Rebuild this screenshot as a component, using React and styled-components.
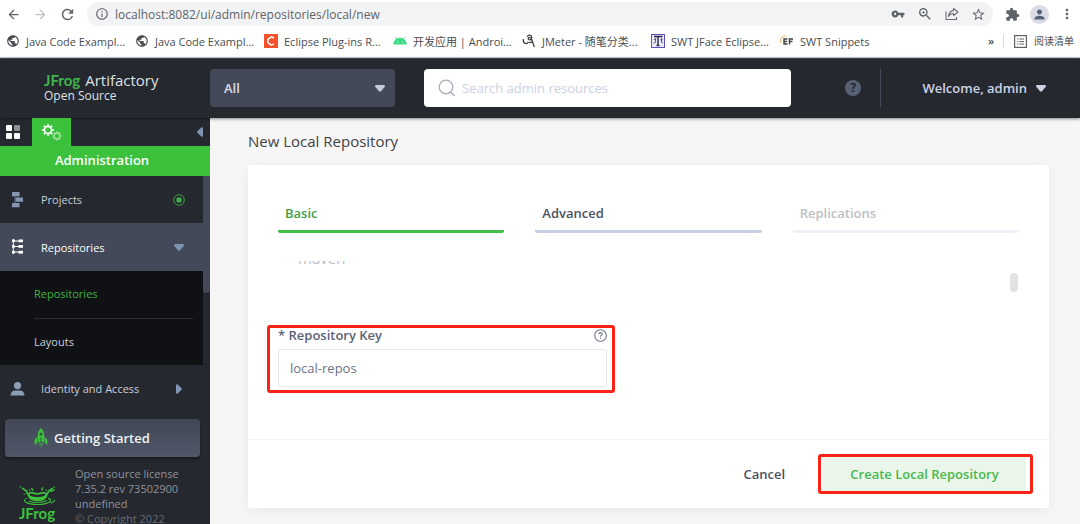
import React from "react";
import styled, { createGlobalStyle } from "styled-components";
import {
  MdArrowBack, MdArrowForward, MdRefresh, MdInfoOutline, MdVpnKey, MdZoomIn,
  MdStarBorder, MdExtension, MdPerson, MdMoreVert, MdPublic,
} from "react-icons/md";

const Global = createGlobalStyle`
  *, *::before, *::after { box-sizing: border-box; }
  body { margin: 0; font-family: "Open Sans", "Noto Sans CJK SC", sans-serif; font-size: 13px; }
  button, input, select { font-family: inherit; margin: 0; }
  button { border: 0; background: none; padding: 0; cursor: pointer; color: inherit; }
  a { color: inherit; text-decoration: none; }
  svg { display: block; flex: none; }
  h1, p, ul { margin: 0; padding: 0; }
  ul { list-style: none; }
`;

const Page = styled.div`
  display: flex;
  flex-direction: column;
  height: 100vh;
  overflow: hidden;
  background: #f6f6f6;
`;

/* Browser chrome */
const Toolbar = styled.div`
  display: flex;
  align-items: center;
  height: 28px;
  padding-left: 5px;
  background: #fff;
  color: #5f6368;
`;
const ToolButton = styled.button`
  display: flex;
  align-items: center;
  justify-content: center;
  width: ${(p) => p.$w || 27}px;
  height: 24px;
  color: ${(p) => (p.$dim ? "#bdc1c6" : "#5f6368")};
`;
const AddressBar = styled.div`
  display: flex;
  align-items: center;
  flex: 1;
  min-width: 0;
  height: 24px;
  margin: 0 6px 0 11px;
  padding: 0 1px 0 8px;
  border-radius: 12px;
  background: #f1f3f4;
`;
const Address = styled.input`
  flex: 1;
  min-width: 0;
  margin-left: 6px;
  padding: 0;
  border: 0;
  outline: 0;
  background: none;
  color: #5f6368;
  font-size: 12px;
`;
const Avatar = styled.span`
  display: grid;
  place-items: center;
  width: 19px;
  height: 19px;
  border-radius: 50%;
  background: #dadce5;
  color: #56617a;
`;
const Bookmarks = styled.nav`
  display: flex;
  align-items: center;
  height: 30px;
  padding: 0 6px 3px 6px;
  background: #fff;
  border-bottom: 1px solid #c9ccd0;
  color: #4a4d51;
  font-size: 11px;
`;
const Bookmark = styled.a`
  display: flex;
  align-items: center;
  gap: 6px;
  flex: 0 0 129px;
  white-space: nowrap;
`;
const Chevron = styled.button`
  margin-left: auto;
  font-size: 11px;
  font-weight: 600;
  line-height: 14px;
`;
const ReadingList = styled.button`
  display: flex;
  align-items: center;
  gap: 7px;
  margin-left: 9px;
  padding-left: 10px;
  height: 14px;
  border-left: 1px solid #dadce0;
  font-size: 10px;
  line-height: 14px;
  white-space: nowrap;
`;

/* Application header */
const Header = styled.header`
  position: relative;
  z-index: 1;
  display: flex;
  align-items: center;
  flex: none;
  height: 60px;
  padding-bottom: 1px;
  border-top: 1px solid #3c404b;
  background: #25282f;
  box-shadow: 0 1px 3px rgba(0, 0, 0, 0.45);
`;
const Brand = styled.a`
  flex: 0 0 210px;
  padding-left: 44px;
  color: #dfe1e6;
  line-height: 16px;
`;
const BrandLine = styled.span`
  display: flex;
  gap: 5px;
  font-size: ${(p) => p.$size}px;
`;
const BrandName = styled.b`
  color: #3eb449;
  font-family: "Lato", sans-serif;
`;
const ScopeBox = styled.div`
  position: relative;
  flex: 0 0 185px;
`;
const Scope = styled.select`
  appearance: none;
  display: block;
  width: 100%;
  height: 38px;
  padding: 0 14px;
  border: 0;
  border-radius: 4px;
  background: #434958;
  color: #dcdfe8;
  font-size: 13px;
  font-weight: 600;
`;
const ScopeCaret = styled.span`
  position: absolute;
  right: 10px;
  top: 16px;
  color: #c5cad6;
  pointer-events: none;
`;
const SearchBox = styled.label`
  display: flex;
  align-items: center;
  flex: 1;
  min-width: 0;
  gap: 6px;
  height: 38px;
  margin-left: 29px;
  padding: 0 14px;
  border-radius: 4px;
  background: #fff;
`;
const Search = styled.input`
  flex: 1;
  min-width: 0;
  padding: 0;
  border: 0;
  outline: 0;
  background: none;
  font-size: 13px;
  color: #434958;
  &::placeholder { color: #cbd1e4; opacity: 1; }
`;
const HelpButton = styled.button`
  display: grid;
  place-items: center;
  flex: none;
  width: 16px;
  height: 16px;
  margin: 0 19px 0 54px;
  border-radius: 50%;
  background: #566173;
  color: #25282f;
  font-size: 12px;
  font-weight: 700;
  line-height: 16px;
`;
const Account = styled.div`
  display: flex;
  align-items: center;
  height: 38px;
  padding: 0 34px 0 41px;
  border-left: 1px solid #434958;
`;
const AccountButton = styled.button`
  display: flex;
  align-items: center;
  gap: 9px;
  color: #cdd3e6;
  font-size: 13px;
  font-weight: 600;
  white-space: nowrap;
`;

/* Sidebar */
const Body = styled.div`
  display: flex;
  flex: 1;
  min-height: 0;
`;
const Sidebar = styled.aside`
  flex: 0 0 210px;
  overflow: hidden;
  background: #25282f;
  color: #c9cfdd;
`;
const ModeTabs = styled.div`
  position: relative;
  z-index: 1;
  display: flex;
  align-items: stretch;
  height: 28px;
`;
const ModeTab = styled.button`
  display: grid;
  place-items: center;
  width: ${(p) => (p.$active ? 39 : 32)}px;
  padding-right: ${(p) => (p.$active ? 0 : 6)}px;
  background: ${(p) => (p.$active ? "#3cc13c" : "none")};
`;
const Collapse = styled.button`
  margin-left: auto;
  padding-right: 7px;
`;
const ModeTitle = styled.div`
  height: 30px;
  padding-right: 6px;
  background: #3cc13c;
  color: #fff;
  font-weight: 600;
  line-height: 28px;
  text-align: center;
`;
const MenuFrame = styled.div`
  display: flex;
`;
const Menu = styled.nav`
  flex: 1;
  font-size: 11px;
`;
const MenuScroll = styled.div`
  width: 7px;
  height: 117px;
  border-radius: 0 0 4px 4px;
  background: #434958;
`;
const MenuItem = styled.a`
  display: flex;
  align-items: center;
  height: ${(p) => (p.$active ? 48 : 47)}px;
  padding: 0 18px 0 10px;
  background: ${(p) => (p.$active ? "#434958" : "none")};
  color: ${(p) => (p.$active ? "#fff" : "#c9cfdd")};
`;
const MenuIcon = styled.span`
  width: 31px;
`;
const MenuLabel = styled.span`
  flex: 1;
`;
const MenuMark = styled.span`
  display: grid;
  place-items: center;
  width: 12px;
`;
const SubMenu = styled.ul`
  padding: 0 10px 0 34px;
  background: #101115;
`;
const SubItem = styled.li`
  height: 47px;
  line-height: 46px;
  color: ${(p) => (p.$active ? "#3cb43c" : "#c9cfdd")};
  & + & { border-top: 1px solid #2b2d33; }
`;
const StartButton = styled.button`
  display: flex;
  align-items: center;
  gap: 6px;
  width: 195px;
  height: 38px;
  margin: 7px 0 0 5px;
  padding-left: 29px;
  border-radius: 4px;
  background: linear-gradient(#414756, #4f5768);
  box-shadow: 0 2px 3px rgba(0, 0, 0, 0.35);
  color: #f2f3f6;
  font-size: 13px;
  font-weight: 600;
`;
const License = styled.div`
  display: flex;
  padding: 9px 0 0 16px;
  gap: 17px;
`;
const LicenseLogo = styled.div`
  display: flex;
  flex-direction: column;
  align-items: center;
  width: 42px;
  padding-top: 20px;
  color: #3cc13c;
  font-family: "Liberation Sans Narrow", "Lato", sans-serif;
  font-size: 15px;
  font-weight: 700;
  line-height: 14px;
`;
const LicenseText = styled.p`
  color: #8f939d;
  font-size: 11px;
  line-height: 15px;
  white-space: nowrap;
`;
const Copyright = styled.span`
  display: block;
  color: #666a73;
`;

/* Main content */
const Main = styled.main`
  flex: 1;
  min-width: 0;
  display: flex;
  flex-direction: column;
  padding: 0 31px 16px 38px;
`;
const Title = styled.h1`
  height: 47px;
  color: #414347;
  font-size: 15px;
  font-weight: 400;
  line-height: 47px;
`;
const Card = styled.section`
  display: flex;
  flex-direction: column;
  flex: 1;
  min-height: 0;
  border-radius: 3px;
  background: #fff;
  box-shadow: 0 2px 12px rgba(0, 0, 0, 0.06);
`;
const Tabs = styled.div`
  display: grid;
  grid-template-columns: repeat(3, 1fr);
  gap: 31px;
  padding: 33px 30px 0;
`;
const Tab = styled.button`
  height: 35px;
  padding: 0 7px 2px;
  border-bottom: 3px solid ${(p) => p.$line};
  border-radius: 2px;
  color: ${(p) => p.$color};
  font-size: 13px;
  font-weight: 600;
  text-align: left;
`;
const FormArea = styled.div`
  display: flex;
  flex: 1;
  min-height: 0;
  margin-top: 28px;
  padding: 0 31px 0 19px;
  overflow: hidden;
`;
const FormScroll = styled.div`
  display: flex;
  flex-direction: column;
  justify-content: flex-end;
  flex: 1;
  padding-left: 11px;
  overflow: hidden;
`;
const PackageType = styled.div`
  flex: none;
  height: 77px;
  padding-left: 20px;
  color: #b9bec9;
  font-size: 15px;
  line-height: 20px;
`;
const Thumb = styled.div`
  width: 8px;
  height: 19px;
  margin-top: 12px;
  border-radius: 4px;
  background: #e2e2e2;
`;
const Field = styled.div`
  position: relative;
  flex: none;
  width: 329px;
  max-width: 100%;
  margin: 0 0 52px;
`;
const FieldHead = styled.div`
  display: flex;
  align-items: center;
  justify-content: space-between;
  height: 24px;
  padding-bottom: 4px;
  color: #5b6377;
  font-weight: 600;
`;
const FieldInput = styled.input`
  display: block;
  width: 100%;
  height: 38px;
  padding: 0 11px;
  border: 1px solid #e4e6ef;
  border-radius: 3px;
  outline: 0;
  color: #6b7386;
  font-size: 13px;
`;
const Highlight = styled.span`
  position: absolute;
  inset: ${(p) => p.$inset};
  border: 3px solid #fb2316;
  border-radius: 3px;
  pointer-events: none;
`;
const Actions = styled.footer`
  display: flex;
  align-items: center;
  justify-content: flex-end;
  gap: 38px;
  height: 69px;
  padding-right: 23px;
  border-top: 1px solid #f2f2f4;
`;
const Cancel = styled.button`
  color: #4b5162;
  font-size: 13px;
  font-weight: 600;
`;
const CreateBox = styled.div`
  position: relative;
`;
const Create = styled.button`
  display: block;
  width: 203px;
  height: 34px;
  background: #ebf6eb;
  color: #47b84b;
  font-size: 13px;
  font-weight: 600;
`;

const Caret = ({ color = "currentColor" }) => (
  <svg width="10" height="7" viewBox="0 0 10 7" fill={color}>
    <path d="M1 0h8q1.600 .8.600 2L6 6.300Q5 7.200 4 6.300L.4 2Q-.6.800 1 0Z" />
  </svg>
);
const SideCaret = ({ left }) => (
  <svg width="6" height="10" viewBox="0 0 6 10" fill="#7f93b2" transform={left ? "rotate(180)" : undefined}>
    <path d="M0 1Q.5-.4 1.800.600L5.600 4.300Q6.200 5 5.600 5.700L1.800 9.400Q.5 10.400 0 9Z" />
  </svg>
);
const SearchIcon = () => (
  <svg width="18" height="18" viewBox="0 0 18 18" fill="none" stroke="#a9aebb" strokeWidth="1.300">
    <circle cx="8" cy="8" r="6.800" />
    <path d="M12.500 13l4.300 4" strokeWidth="1.600" />
  </svg>
);
const ShareIcon = () => (
  <svg width="14" height="14" viewBox="0 0 14 14" fill="none" stroke="#6b6f74" strokeWidth="1.100">
    <path d="M1 4.500v8h10.500V10M8.500 1.500L13 5 8.500 8.500V6.500C6 6.500 4.500 7.500 3.500 9.500 3.800 6 5.500 3.900 8.500 3.600Z" strokeLinejoin="round" />
  </svg>
);
const EclipseC = () => (
  <svg width="14" height="14" viewBox="0 0 14 14">
    <rect width="14" height="14" fill="#f4512c" />
    <path d="M10 4.200A3.700 3.700 0 1 0 10 9.800" fill="none" stroke="#fff" strokeWidth="1.500" />
  </svg>
);
const AndroidHead = () => (
  <svg width="14" height="14" viewBox="0 0 14 14">
    <path d="M.3 10.500a6.700 6.700 0 0 1 13.400 0Z" fill="#3ddc84" />
    <path d="M3.900 5.500L2.500 3M10.100 5.500L11.500 3" stroke="#3ddc84" strokeWidth=".8" />
    <circle cx="4.300" cy="8" r=".6" fill="#fff" /><circle cx="9.700" cy="8" r=".6" fill="#fff" />
  </svg>
);
const CnblogsIcon = () => (
  <svg width="14" height="14" viewBox="0 0 14 14" fill="none" stroke="#38393c" strokeWidth="1.200">
    <path d="M1.200 5C1 9.500 4 11 6.500 7.800M5 2.800C6.500.3 9.800.6 9.800 3.600 9.800 6.600 6.200 6.600 6.200 4.400 6.300 2.900 8 2.900 9.500 4.600L12.300 13M7 8.800Q9 7.600 10.800 8.500" />
  </svg>
);
const JavaSourceIcon = () => (
  <svg width="14" height="14" viewBox="0 0 14 14" fill="none">
    <rect x=".5" y=".5" width="13" height="13" fill="#eceafa" stroke="#5a4fc0" />
    <path d="M3 2.500h8.500M7 3v8.500M5.500 11.500h3" stroke="#26273a" strokeWidth="1.400" />
    <path d="M4.500 4v4q-.3 1.500-2 1M10.500 4v4q.5 1.500 1.500.5M9.300 5.800h2.500M2.800 5.500h1.500" stroke="#5d5e78" />
  </svg>
);
const EfIcon = () => (
  <svg width="14" height="14" viewBox="0 0 14 14" fill="none">
    <path d="M1 9C-.2 5 2 2 5.500 1.800" stroke="#f3a64b" strokeWidth="1" />
    <path d="M7.500 5H4v5h3.500M4 7.500h3M13 5H9.500v5.500M9.500 7.500h3" stroke="#3f4147" strokeWidth="1.400" />
  </svg>
);
const ListIcon = () => (
  <svg width="13" height="13" viewBox="0 0 13 13" fill="none" stroke="#5f6368" strokeWidth="1.200">
    <rect x=".6" y=".6" width="11.800" height="11.800" />
    <path d="M3 4h1.300M5.300 4H10M3 6.500h1.300M5.300 6.500H10M3 9h1.300M5.300 9H10" />
  </svg>
);
const GridIcon = () => (
  <svg width="14" height="14" viewBox="0 0 14 14" fill="#fff">
    <rect width="6" height="6" rx="1" /><rect x="8" width="6" height="6" rx="1" fill="#8d8f94" />
    <rect y="8" width="6" height="6" rx="1" /><rect x="8" y="8" width="6" height="6" rx="1" />
  </svg>
);
const Gear = ({ x, y, r, color }) => (
  <g transform={`translate(${x} ${y}) scale(${r})`} fill="none" stroke={color}>
    <circle r=".62" strokeWidth=".28" />
    {[0, 45, 90, 135, 180, 225, 270, 315].map((a) => (
      <path key={a} d="M0-.72V-1" strokeWidth=".34" transform={`rotate(${a})`} />
    ))}
  </g>
);
const GearsIcon = () => (
  <svg width="20" height="17" viewBox="0 0 20 17">
    <Gear x={6} y={6} r={5.8} color="#fff" />
    <Gear x={15} y={12} r={4.6} color="#a5e3a5" />
  </svg>
);
const ProjectsIcon = () => (
  <svg width="14" height="16" viewBox="0 0 14 16" fill="#8496b0">
    <rect x="2" y="0" width="7.500" height="4.300" /><rect x="5.500" y="5.500" width="7.500" height="4.300" /><rect x="2" y="11" width="7.500" height="4.300" />
    <path d="M4.500 4h1v7h-1z" opacity=".6" />
  </svg>
);
const ReposIcon = () => (
  <svg width="14" height="16" viewBox="0 0 14 16" fill="#fff">
    <path d="M2.800 0h1.200v15H2.800z" opacity=".8" />
    <path d="M4 1.500h5v1H4zM4 7h5v1H4zM4 12.500h5v1H4z" />
    <rect x="2" y=".5" width="2.800" height="2.500" /><rect x="2" y="6.200" width="2.800" height="2.500" /><rect x="2" y="12" width="2.800" height="2.500" />
    <rect x="8.500" y=".5" width="4.500" height="2.800" /><rect x="8.500" y="6" width="4.500" height="2.800" /><rect x="8.500" y="11.800" width="4.500" height="2.800" />
  </svg>
);
const UserIcon = () => (
  <svg width="15" height="14" viewBox="0 0 15 14" fill="#8b9cb5">
    <circle cx="7.500" cy="3.600" r="3.600" /><path d="M.5 13.500Q1 8.500 5 8.500h5q4 0 4.500 5Z" />
  </svg>
);
const TargetIcon = () => (
  <svg width="12" height="12" viewBox="0 0 12 12">
    <circle cx="6" cy="6" r="5.300" fill="none" stroke="#3f9d45" /><circle cx="6" cy="6" r="2.700" fill="#3fae45" />
  </svg>
);
const RocketIcon = () => (
  <svg width="14" height="21" viewBox="0 0 14 21" fill="#3cc13c">
    <path d="M7 0Q10.500 3.500 10.300 8.500L10 14H4L3.700 8.500Q3.500 3.500 7 0Z" />
    <path d="M3.200 8.500L.6 12v5L3.500 14.500ZM10.800 8.500L13.400 12v5L10.500 14.500ZM4.500 15h1l-.2 3ZM8.500 15h1l-.8 3ZM6.300 15h1.400L7 21Z" />
    <circle cx="7" cy="6" r="1.500" fill="#2c5a3a" /><path d="M6.500 9.500h1V14h-1z" fill="#2c5a3a" />
  </svg>
);
const SplashIcon = () => (
  <svg width="37" height="20" viewBox="0 0 38 21" fill="none" stroke="#3cc13c" strokeLinecap="round">
    <path d="M3.500 2.500L7 5 9.500 9.500Q11 15 19 15T28.500 9.500L31 5 34.500 2.500" strokeWidth="1.800" />
    <path d="M9.500 9Q10.500 6 15 7.500 19 9 23 7.500 27.500 6 28.500 9 27 12.800 19 12.500 11 12.800 9.500 9Z" strokeWidth="1.900" />
    <path d="M10.500 11Q13 14 19 14T27.500 11" strokeWidth="2.400" />
    <path d="M7.500 13Q3.500 14.500 6.500 16.800 10.500 19.500 19 19.500T32 16.500Q34.500 14 30.500 13M10.500 16Q19 19 28.500 15.500M33 17.800Q36.500 16.800 37 14.800" strokeWidth="1.100" />
    <path d="M.9 1h.2M13 2.500l1 2M24.500 2l-1 2M33 5.500l3.500-1.500M36.500 1.200h.2M5 8.500h.2M10.500 4.500h.2M28 4.500h.2" strokeWidth="1.500" />
  </svg>
);
const HelpOutline = () => (
  <svg width="13" height="13" viewBox="0 0 13 13" fill="none" stroke="#6f7789" strokeWidth="1.100">
    <circle cx="6.500" cy="6.500" r="5.800" />
    <path d="M4.800 5.200Q4.900 3.600 6.500 3.600T8.200 5.100Q8.200 6 7.200 6.500 6.500 6.900 6.500 7.700M6.500 8.700v1" />
  </svg>
);

const bookmarks = [
  [<MdPublic size={14} />, "Java Code Exampl..."],
  [<MdPublic size={14} />, "Java Code Exampl..."],
  [<EclipseC />, "Eclipse Plug-ins R..."],
  [<AndroidHead />, "开发应用 | Androi..."],
  [<CnblogsIcon />, "JMeter - 随笔分类..."],
  [<JavaSourceIcon />, "SWT JFace Eclipse..."],
  [<EfIcon />, "SWT Snippets"],
];

export default function App() {
  return (
    <Page>
      <Global />
      <Toolbar>
        <ToolButton $w={17} aria-label="Back"><MdArrowBack size={15} /></ToolButton>
        <ToolButton $w={37} $dim aria-label="Forward"><MdArrowForward size={15} /></ToolButton>
        <ToolButton $w={17} aria-label="Reload"><MdRefresh size={17} /></ToolButton>
        <AddressBar>
          <MdInfoOutline size={14} />
          <Address aria-label="Address" defaultValue="localhost:8082/ui/admin/repositories/local/new" />
          <ToolButton aria-label="Passwords"><MdVpnKey size={14} /></ToolButton>
          <ToolButton aria-label="Zoom"><MdZoomIn size={16} /></ToolButton>
          <ToolButton aria-label="Share"><ShareIcon /></ToolButton>
          <ToolButton aria-label="Bookmark"><MdStarBorder size={15} /></ToolButton>
        </AddressBar>
        <ToolButton aria-label="Extensions"><MdExtension size={15} /></ToolButton>
        <ToolButton aria-label="Profile"><Avatar><MdPerson size={15} /></Avatar></ToolButton>
        <ToolButton aria-label="More"><MdMoreVert size={16} /></ToolButton>
      </Toolbar>
      <Bookmarks aria-label="Bookmarks">
        {bookmarks.map(([icon, text], i) => (
          <Bookmark href="#" key={i}>{icon}{text}</Bookmark>
        ))}
        <Chevron aria-label="More bookmarks">»</Chevron>
        <ReadingList><ListIcon />阅读清单</ReadingList>
      </Bookmarks>

      <Header>
        <Brand href="#">
          <BrandLine $size={15}><BrandName>JFrog</BrandName>Artifactory</BrandLine>
          <BrandLine $size={12}>Open Source</BrandLine>
        </Brand>
        <ScopeBox>
          <Scope aria-label="Scope"><option>All</option></Scope>
          <ScopeCaret><Caret /></ScopeCaret>
        </ScopeBox>
        <SearchBox>
          <SearchIcon />
          <Search aria-label="Search" placeholder="Search admin resources" />
        </SearchBox>
        <HelpButton aria-label="Help">?</HelpButton>
        <Account>
          <AccountButton>Welcome, admin<Caret /></AccountButton>
        </Account>
      </Header>

      <Body>
        <Sidebar>
          <ModeTabs>
            <ModeTab aria-label="Application"><GridIcon /></ModeTab>
            <ModeTab $active aria-label="Administration"><GearsIcon /></ModeTab>
            <Collapse aria-label="Collapse"><SideCaret left /></Collapse>
          </ModeTabs>
          <ModeTitle>Administration</ModeTitle>
          <MenuFrame>
            <Menu>
              <MenuItem href="#"><MenuIcon><ProjectsIcon /></MenuIcon><MenuLabel>Projects</MenuLabel><MenuMark><TargetIcon /></MenuMark></MenuItem>
              <MenuItem href="#" $active><MenuIcon><ReposIcon /></MenuIcon><MenuLabel>Repositories</MenuLabel><MenuMark><Caret color="#7f93b2" /></MenuMark></MenuItem>
              <SubMenu>
                <SubItem $active><a href="#">Repositories</a></SubItem>
                <SubItem><a href="#">Layouts</a></SubItem>
              </SubMenu>
              <MenuItem href="#"><MenuIcon><UserIcon /></MenuIcon><MenuLabel>Identity and Access</MenuLabel><MenuMark><SideCaret /></MenuMark></MenuItem>
            </Menu>
            <MenuScroll />
          </MenuFrame>
          <StartButton><RocketIcon />Getting Started</StartButton>
          <License>
            <LicenseLogo><SplashIcon />JFrog</LicenseLogo>
            <LicenseText>
              Open source license<br />7.35.2 rev 73502900<br />undefined
              <Copyright>© Copyright 2022</Copyright>
            </LicenseText>
          </License>
        </Sidebar>

        <Main>
          <Title>New Local Repository</Title>
          <Card>
            <Tabs role="tablist">
              <Tab role="tab" $color="#43a047" $line="#3fbf48">Basic</Tab>
              <Tab role="tab" $color="#4b5162" $line="#c8cfe4">Advanced</Tab>
              <Tab role="tab" $color="#bcbfc6" $line="#f0f1f8">Replications</Tab>
            </Tabs>
            <FormArea>
              <FormScroll>
                <PackageType>maven</PackageType>
                <Field>
                  <FieldHead>
                    <label htmlFor="repo-key">* Repository Key</label>
                    <HelpOutline />
                  </FieldHead>
                  <FieldInput id="repo-key" defaultValue="local-repos" />
                  <Highlight $inset="0 -8px -6px -11px" />
                </Field>
              </FormScroll>
              <Thumb />
            </FormArea>
            <Actions>
              <Cancel>Cancel</Cancel>
              <CreateBox>
                <Create>Create Local Repository</Create>
                <Highlight $inset="-3px -7px -3px -5px" />
              </CreateBox>
            </Actions>
          </Card>
        </Main>
      </Body>
    </Page>
  );
}
